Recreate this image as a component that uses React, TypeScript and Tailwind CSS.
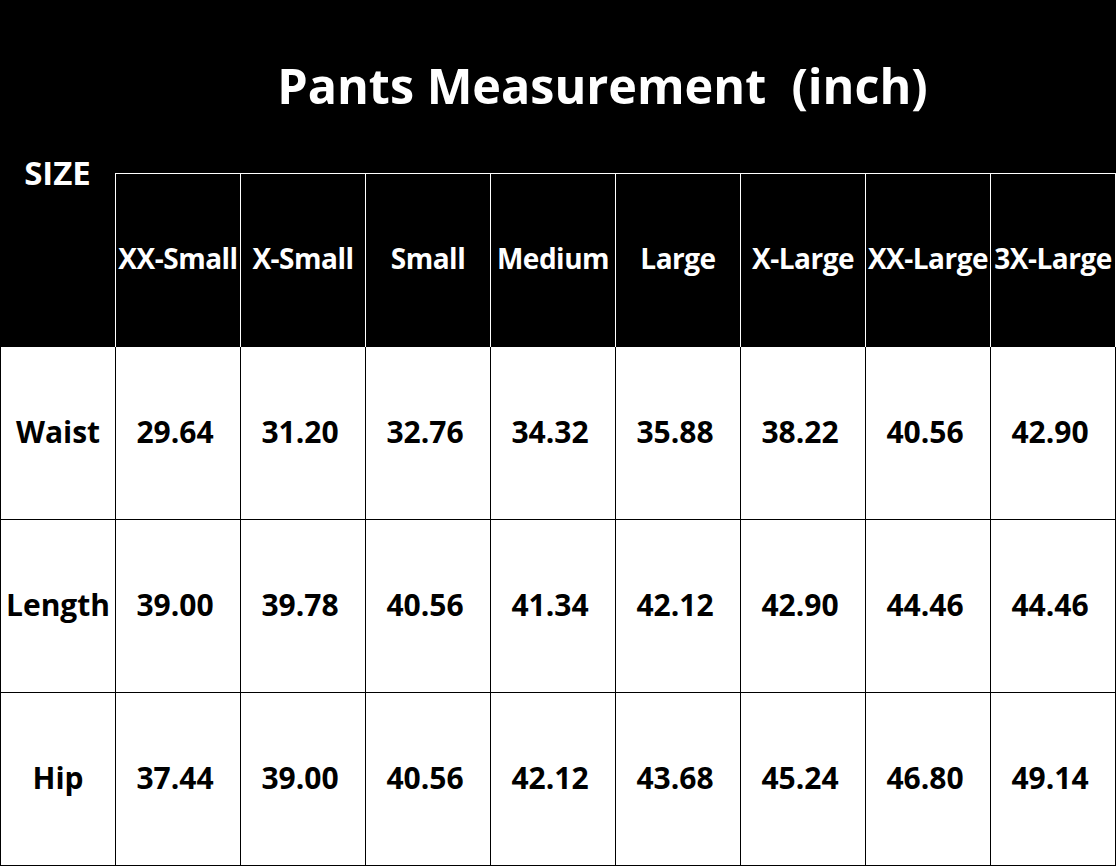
import React from 'react';

const sizes = ['XX-Small', 'X-Small', 'Small', 'Medium', 'Large', 'X-Large', 'XX-Large', '3X-Large'];

const rows = [
    { name: 'Waist', values: ['29.64', '31.20', '32.76', '34.32', '35.88', '38.22', '40.56', '42.90'] },
    { name: 'Length', values: ['39.00', '39.78', '40.56', '41.34', '42.12', '42.90', '44.46', '44.46'] },
    { name: 'Hip', values: ['37.44', '39.00', '40.56', '42.12', '43.68', '45.24', '46.80', '49.14'] },
];

const App = () => {
    return (
        <div className="w-[1116px] h-[867px] bg-white overflow-hidden font-['Open_Sans',sans-serif] font-bold">
            {/* black header block */}
            <div className="flex bg-black text-white h-[347px]">
                <div className="w-[115px] flex items-center justify-center text-[33px] pb-[2px]">SIZE</div>
                <div className="flex flex-col w-[1001px]">
                    <div className="h-[173px] flex items-center justify-center text-[48.5px] whitespace-pre pr-[26px] pb-[2px]">
                        Pants Measurement  (inch)
                    </div>
                    <div className="flex h-[174px] border-t border-white">
                        {sizes.map((s, i) => (
                            <div
                                key={s}
                                className={
                                    'flex items-center justify-center whitespace-nowrap text-[28px] tracking-[-0.5px] pb-[5px] border-l border-white ' +
                                    (i === sizes.length - 1 ? 'w-[126px] border-r' : 'w-[125px]')
                                }
                            >
                                {s}
                            </div>
                        ))}
                    </div>
                </div>
            </div>

            {/* data rows */}
            {rows.map((r) => (
                <div key={r.name} className="flex h-[173px] border-b border-black text-black text-[30px]">
                    <div className="w-[115px] flex items-center justify-center pb-[4px] border-l border-black">{r.name}</div>
                    {r.values.map((v, i) => (
                        <div
                            key={i}
                            className={
                                'flex items-center justify-center pb-[4px] pr-[6px] border-l border-black ' +
                                (i === r.values.length - 1 ? 'w-[126px] border-r' : 'w-[125px]')
                            }
                        >
                            {v}
                        </div>
                    ))}
                </div>
            ))}
        </div>
    );
};

export default App;
